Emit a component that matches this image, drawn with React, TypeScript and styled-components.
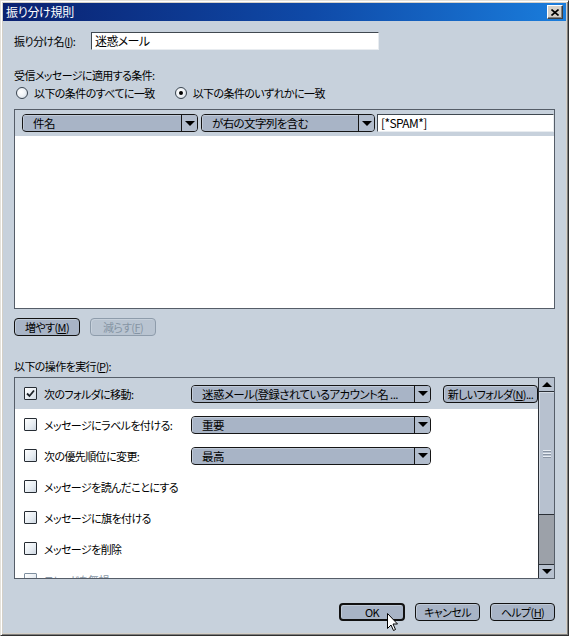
import styled, { createGlobalStyle } from 'styled-components'

const GlobalStyle = createGlobalStyle`
  html, body {
    margin: 0;
    padding: 0;
    background: #c7d1dc;
  }
  body {
    font-family: 'Noto Sans CJK JP', 'Noto Sans', sans-serif;
    font-size: 11px;
    color: #000;
    font-feature-settings: 'palt';
    letter-spacing: -0.6px;
  }
  * {
    box-sizing: border-box;
  }
`

const Window = styled.div`
  position: relative;
  width: 569px;
  height: 636px;
  background: #d4d0c8;
  border: 1px solid;
  border-color: #e4e1da #303030 #303030 #e4e1da;
  box-shadow: inset 1px 1px #ffffff, inset -1px -1px #808080;
  padding: 2px;
  display: flex;
  flex-direction: column;
  overflow: hidden;
`

const TitleBar = styled.div`
  height: 18px;
  flex-shrink: 0;
  display: flex;
  align-items: center;
  justify-content: space-between;
  padding: 0 3px 0 3px;
  background: linear-gradient(90deg, #0a2170 0%, #0f4aa8 55%, #1a7ddc 100%);
  color: #fff;
  font-size: 12px;
  line-height: 18px;
  letter-spacing: -0.3px;
`

const CloseButton = styled.div`
  width: 16px;
  height: 14px;
  background: #d4d0c8;
  border: 1px solid;
  border-color: #ffffff #404040 #404040 #ffffff;
  box-shadow: inset -1px -1px #808080;
  display: flex;
  align-items: center;
  justify-content: center;
`

const Content = styled.div`
  flex: 1;
  background: #c7d1dc;
  padding: 11px 11px 0 11px;
  display: flex;
  flex-direction: column;
`

const NameRow = styled.div`
  height: 18px;
  display: flex;
  align-items: center;
`

const NameLabel = styled.span`
  width: 77px;
  line-height: 18px;
  white-space: nowrap;
`

const TextField = styled.div<{ $width?: number }>`
  width: ${({ $width }) => ($width ? `${$width}px` : 'auto')};
  flex: ${({ $width }) => ($width ? '0 0 auto' : '1')};
  height: 18px;
  background: #fff;
  border: 1px solid;
  border-color: #404850 #e8ecf0 #e8ecf0 #404850;
  padding-left: 3px;
  line-height: 16px;
  white-space: nowrap;
  overflow: hidden;
  font-size: 12px;
`

const SectionLabel = styled.div<{ $top: number }>`
  margin-top: ${({ $top }) => $top}px;
  height: 14px;
  line-height: 14px;
  white-space: nowrap;
`

const U = styled.span`
  text-decoration: underline;
`

const RadioRow = styled.div`
  margin-top: 4px;
  height: 14px;
  display: flex;
  align-items: center;
  gap: 20px;
  padding-left: 2px;
`

const RadioOption = styled.label`
  display: flex;
  align-items: center;
  gap: 6px;
  line-height: 14px;
  white-space: nowrap;
`

const RadioCircle = styled.span<{ $checked?: boolean }>`
  width: 12px;
  height: 12px;
  border-radius: 50%;
  border: 1px solid #3a4550;
  background: radial-gradient(circle at 40% 40%, #ffffff 0%, #eef2f6 50%, #c2ccd8 100%);
  display: flex;
  align-items: center;
  justify-content: center;
  &::after {
    content: '';
    display: ${({ $checked }) => ($checked ? 'block' : 'none')};
    width: 4px;
    height: 4px;
    border-radius: 50%;
    background: #000;
  }
`

const ListBox = styled.div<{ $height: number; $top: number }>`
  margin-top: ${({ $top }) => $top}px;
  height: ${({ $height }) => $height}px;
  flex-shrink: 0;
  background: #fff;
  border: 1px solid #555d68;
  overflow: hidden;
  display: flex;
`

const ConditionRows = styled.div`
  flex: 1;
  display: flex;
  flex-direction: column;
`

const ConditionRow = styled.div`
  height: 26px;
  display: flex;
  align-items: center;
  padding-left: 7px;
  background: #c7d1dc;
`

const Select = styled.div<{ $width: number; $gap?: number }>`
  width: ${({ $width }) => $width}px;
  margin-right: ${({ $gap }) => $gap ?? 0}px;
  flex-shrink: 0;
  height: 18px;
  display: flex;
  border: 1px solid #151515;
  border-radius: 4px;
  background: #a8b4c6;
  overflow: hidden;
`

const SelectValue = styled.span`
  flex: 1;
  min-width: 0;
  padding-left: 10px;
  line-height: 16px;
  font-size: 11.5px;
  white-space: nowrap;
  overflow: hidden;
  box-shadow: inset 1px 1px #c0cad8;
`

const SelectArrow = styled.span`
  width: 16px;
  flex-shrink: 0;
  border-left: 1px solid #151515;
  display: flex;
  align-items: center;
  justify-content: center;
  background: #b2bdcd;
  &::after {
    content: '';
    width: 0;
    height: 0;
    border-left: 5px solid transparent;
    border-right: 5px solid transparent;
    border-top: 5px solid #000;
  }
`

const ButtonRow = styled.div<{ $top: number; $end?: boolean }>`
  margin-top: ${({ $top }) => $top}px;
  height: 18px;
  display: flex;
  gap: 10px;
  justify-content: ${({ $end }) => ($end ? 'flex-end' : 'flex-start')};
`

const Button = styled.div<{ $width: number; $default?: boolean; $disabled?: boolean }>`
  width: ${({ $width }) => $width}px;
  height: 18px;
  border-radius: 4px;
  border: ${({ $default }) => ($default ? 2 : 1)}px solid ${({ $disabled }) => ($disabled ? '#8e9cab' : '#111')};
  background: ${({ $disabled }) => ($disabled ? '#b9c4d1' : '#a8b4c6')};
  color: ${({ $disabled }) => ($disabled ? '#8594a4' : '#000')};
  box-shadow: inset 1px 1px ${({ $disabled }) => ($disabled ? '#c6d0db' : '#bfc9d6')};
  display: flex;
  align-items: center;
  justify-content: center;
  white-space: nowrap;
  overflow: hidden;
  line-height: 14px;
  font-size: 11px;
  flex-shrink: 0;
`

const ActionRows = styled.div`
  flex: 1;
  min-width: 0;
  display: flex;
  flex-direction: column;
  overflow: hidden;
`

const ActionRow = styled.div<{ $active?: boolean; $disabled?: boolean }>`
  height: 31px;
  flex-shrink: 0;
  display: flex;
  align-items: center;
  padding-left: 9px;
  background: ${({ $active }) => ($active ? '#c7d1dc' : 'transparent')};
  color: ${({ $disabled }) => ($disabled ? '#8c9aa8' : '#000')};
`

const CheckBox = styled.span<{ $disabled?: boolean }>`
  width: 13px;
  height: 13px;
  flex-shrink: 0;
  border: 1px solid ${({ $disabled }) => ($disabled ? '#7f8f9f' : '#262c33')};
  border-radius: 1px;
  background: linear-gradient(135deg, #ffffff 0%, #e6ecf2 60%, #cdd6e0 100%);
  display: flex;
  align-items: center;
  justify-content: center;
  margin-right: 7px;
`

const ActionLabel = styled.span`
  width: 147px;
  flex-shrink: 0;
  white-space: nowrap;
  line-height: 14px;
`

const Scrollbar = styled.div`
  width: 16px;
  flex-shrink: 0;
  display: flex;
  flex-direction: column;
  border-left: 1px solid #2a2f36;
  background: #9ca1a9;
`

const ScrollButton = styled.div<{ $up?: boolean }>`
  height: 14px;
  background: #b7c1cf;
  border-bottom: ${({ $up }) => ($up ? '1px solid #2a2f36' : 'none')};
  border-top: ${({ $up }) => ($up ? 'none' : '1px solid #2a2f36')};
  display: flex;
  align-items: center;
  justify-content: center;
  &::after {
    content: '';
    width: 0;
    height: 0;
    border-left: 5px solid transparent;
    border-right: 5px solid transparent;
    ${({ $up }) => ($up ? 'border-bottom: 5px solid #000;' : 'border-top: 5px solid #000;')}
  }
`

const ScrollThumb = styled.div`
  height: 123px;
  background: #b7c1cf;
  border-bottom: 1px solid #2a2f36;
  box-shadow: inset 1px 1px #d3dae3;
  display: flex;
  flex-direction: column;
  align-items: center;
  justify-content: center;
  gap: 2px;
`

const Grip = styled.span`
  width: 8px;
  height: 1px;
  background: #e8edf3;
  box-shadow: 0 1px #8994a3;
`

const ScrollTrack = styled.div`
  flex: 1;
  background: #9ca1a9;
`

const Cursor = styled.svg`
  position: absolute;
  left: 386px;
  top: 612px;
`

type SelectBoxProps = { width: number; value: string; gap?: number }

const SelectBox = ({ width, value, gap }: SelectBoxProps) => (
  <Select $width={width} $gap={gap}>
    <SelectValue>{value}</SelectValue>
    <SelectArrow />
  </Select>
)

const Check = () => (
  <svg width="9" height="9" viewBox="0 0 9 9">
    <path d="M1 4.5 L3.5 7 L8 1.5" fill="none" stroke="#1c2228" strokeWidth="1.8" />
  </svg>
)

type Action = { label: string; checked?: boolean; select?: string; disabled?: boolean; extra?: boolean }

const actions: Action[] = [
  { label: '次のフォルダに移動:', checked: true, select: '迷惑メール(登録されているアカウント名 ...', extra: true },
  { label: 'メッセージにラベルを付ける:', select: '重要' },
  { label: '次の優先順位に変更:', select: '最高' },
  { label: 'メッセージを読んだことにする' },
  { label: 'メッセージに旗を付ける' },
  { label: 'メッセージを削除' },
  { label: 'スレッドを無視', disabled: true },
]

export default function App() {
  return (
    <>
      <GlobalStyle />
      <Window>
        <TitleBar>
          <span>振り分け規則</span>
          <CloseButton>
            <svg width="8" height="7" viewBox="0 0 8 7">
              <path d="M0.5 0.5 L7.5 6.5 M7.5 0.5 L0.5 6.5" stroke="#000" strokeWidth="1.6" />
            </svg>
          </CloseButton>
        </TitleBar>
        <Content>
          <NameRow>
            <NameLabel>振り分け名(<U>I</U>):</NameLabel>
            <TextField $width={288}>迷惑メール</TextField>
          </NameRow>

          <SectionLabel $top={18}>受信メッセージに適用する条件:</SectionLabel>
          <RadioRow>
            <RadioOption>
              <RadioCircle />
              以下の条件のすべてに一致
            </RadioOption>
            <RadioOption>
              <RadioCircle $checked />
              以下の条件のいずれかに一致
            </RadioOption>
          </RadioRow>

          <ListBox $height={200} $top={9}>
            <ConditionRows>
              <ConditionRow>
                <SelectBox width={176} gap={3} value="件名" />
                <SelectBox width={174} gap={2} value="が右の文字列を含む" />
                <TextField>[*SPAM*]</TextField>
              </ConditionRow>
            </ConditionRows>
          </ListBox>

          <ButtonRow $top={9}>
            <Button $width={66}>増やす(<U>M</U>)</Button>
            <Button $width={66} $disabled>減らす(<U>F</U>)</Button>
          </ButtonRow>

          <SectionLabel $top={23}>以下の操作を実行(<U>P</U>):</SectionLabel>

          <ListBox $height={202} $top={4}>
            <ActionRows>
              {actions.map((a) => (
                <ActionRow key={a.label} $active={a.extra} $disabled={a.disabled}>
                  <CheckBox $disabled={a.disabled}>{a.checked && <Check />}</CheckBox>
                  <ActionLabel>{a.label}</ActionLabel>
                  {a.select && <SelectBox width={240} gap={12} value={a.select} />}
                  {a.extra && (
                    <Button $width={95}>
                      新しいフォルダ(<U>N</U>)...
                    </Button>
                  )}
                </ActionRow>
              ))}
            </ActionRows>
            <Scrollbar>
              <ScrollButton $up />
              <ScrollThumb>
                <Grip />
                <Grip />
                <Grip />
              </ScrollThumb>
              <ScrollTrack />
              <ScrollButton />
            </Scrollbar>
          </ListBox>

          <ButtonRow $top={24} $end>
            <Button $width={66} $default>OK</Button>
            <Button $width={65}>キャンセル</Button>
            <Button $width={65}>ヘルプ(<U>H</U>)</Button>
          </ButtonRow>
        </Content>
        <Cursor width="12" height="19" viewBox="0 0 12 19">
          <path d="M0.5 0.5 L0.5 15.5 L4 12 L6.5 17.5 L8.5 16.5 L6 11 L10.5 11 Z" fill="#fff" stroke="#000" strokeWidth="1" />
        </Cursor>
      </Window>
    </>
  )
}
